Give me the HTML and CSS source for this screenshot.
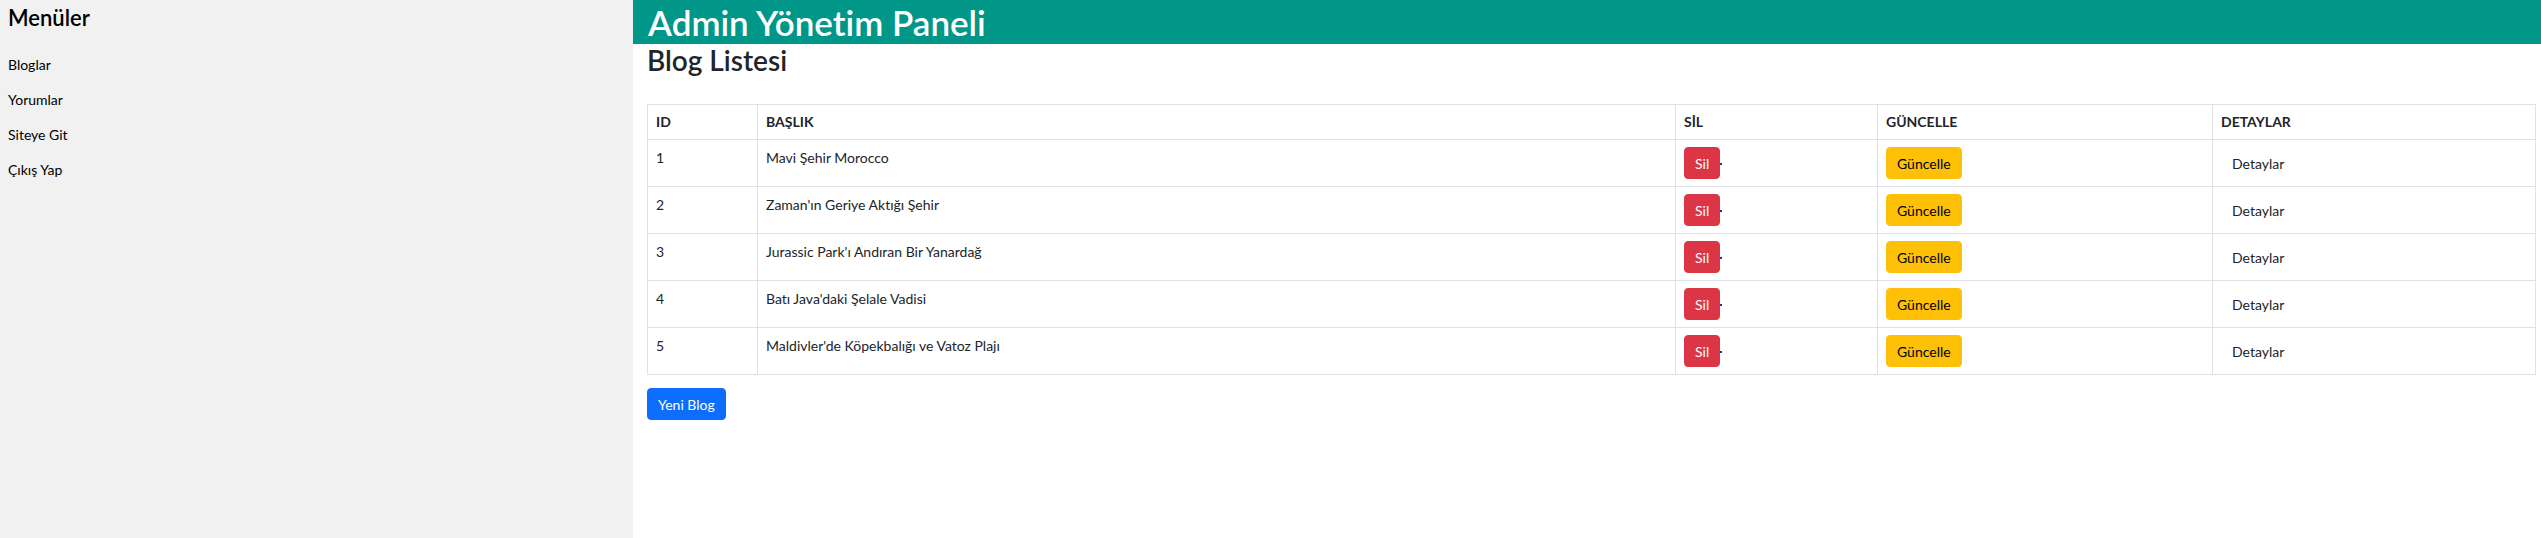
FILE: index.html
```html
<!DOCTYPE html>
<html lang="tr">
<head>
<meta charset="utf-8">
<title>Admin Yönetim Paneli</title>
<link rel="stylesheet" href="styles.css">
</head>
<body>
<div class="layout">
  <aside class="sidebar">
    <h3 class="side-title">Menüler</h3>
    <a class="side-item" href="#">Bloglar</a>
    <a class="side-item" href="#">Yorumlar</a>
    <a class="side-item" href="#">Siteye Git</a>
    <a class="side-item" href="#">Çıkış Yap</a>
  </aside>
  <main class="main">
    <header class="topbar">
      <h1 class="topbar-title">Admin Yönetim Paneli</h1>
    </header>
    <section class="content">
      <h2 class="page-title">Blog Listesi</h2>
      <table class="grid">
        <colgroup>
          <col class="c-id">
          <col class="c-title">
          <col class="c-del">
          <col class="c-upd">
          <col class="c-det">
        </colgroup>
        <thead>
          <tr><th>ID</th><th>BAŞLIK</th><th>SİL</th><th>GÜNCELLE</th><th>DETAYLAR</th></tr>
        </thead>
        <tbody>
          <tr>
            <td>1</td><td>Mavi Şehir Morocco</td>
            <td><a class="btn btn-del" href="#">Sil</a><span class="dot"></span></td>
            <td><a class="btn btn-upd" href="#">Güncelle</a></td>
            <td><a class="btn btn-plain" href="#">Detaylar</a></td>
          </tr>
          <tr>
            <td>2</td><td>Zaman'ın Geriye Aktığı Şehir</td>
            <td><a class="btn btn-del" href="#">Sil</a><span class="dot"></span></td>
            <td><a class="btn btn-upd" href="#">Güncelle</a></td>
            <td><a class="btn btn-plain" href="#">Detaylar</a></td>
          </tr>
          <tr>
            <td>3</td><td>Jurassic Park'ı Andıran Bir Yanardağ</td>
            <td><a class="btn btn-del" href="#">Sil</a><span class="dot"></span></td>
            <td><a class="btn btn-upd" href="#">Güncelle</a></td>
            <td><a class="btn btn-plain" href="#">Detaylar</a></td>
          </tr>
          <tr>
            <td>4</td><td>Batı Java'daki Şelale Vadisi</td>
            <td><a class="btn btn-del" href="#">Sil</a><span class="dot"></span></td>
            <td><a class="btn btn-upd" href="#">Güncelle</a></td>
            <td><a class="btn btn-plain" href="#">Detaylar</a></td>
          </tr>
          <tr>
            <td>5</td><td>Maldivler'de Köpekbalığı ve Vatoz Plajı</td>
            <td><a class="btn btn-del" href="#">Sil</a><span class="dot"></span></td>
            <td><a class="btn btn-upd" href="#">Güncelle</a></td>
            <td><a class="btn btn-plain" href="#">Detaylar</a></td>
          </tr>
        </tbody>
      </table>
      <a class="btn btn-new" href="#">Yeni Blog</a>
    </section>
  </main>
</div>
</body>
</html>
```
FILE: styles.css
```css
* { box-sizing: border-box; }
html, body { margin: 0; padding: 0; }
body {
  font-family: Lato, "Open Sans", sans-serif;
  font-size: 14px;
  line-height: 21px;
  color: #212529;
  background: #fff;
  font-variant-ligatures: none;
}
a { text-decoration: none; }

.layout {
  display: flex;
  min-height: 100vh;
}

.sidebar {
  width: 633px;
  flex: none;
  background: #f1f1f1;
  display: flex;
  flex-direction: column;
}
.side-title {
  margin: 5px 0 16px;
  padding: 0 8px;
  font-size: 22px;
  line-height: 26px;
  font-weight: 600;
  color: #000;
}
.side-item {
  display: block;
  padding: 7px 8px;
  line-height: 21px;
  color: #000;
}

.main {
  flex: 1;
  min-width: 0;
}
.topbar {
  background: #009688;
  height: 44px;
  padding: 4px 15px;
}
.topbar-title {
  margin: 0;
  font-size: 35px;
  line-height: 36px;
  font-weight: 600;
  color: #fff;
}

.content {
  padding: 0 5px 0 14px;
}
.page-title {
  margin: 0 0 27px;
  font-size: 28px;
  line-height: 33px;
  font-weight: 600;
  color: #212529;
}

.grid {
  width: 100%;
  table-layout: fixed;
  border-collapse: separate;
  border-spacing: 0;
  border-top: 1px solid #dee2e6;
  border-left: 1px solid #dee2e6;
}
.c-id { width: 110px; }
.c-title { width: 918px; }
.c-del { width: 202px; }
.c-upd { width: 335px; }
.c-det { width: auto; }

.grid th, .grid td {
  border-right: 1px solid #dee2e6;
  border-bottom: 1px solid #dee2e6;
  text-align: left;
  vertical-align: top;
}
.grid th {
  padding: 8px 8px 8px;
  line-height: 18px;
  font-weight: 700;
  color: #212529;
}
.grid td {
  padding: 7px 8px;
  line-height: 21px;
  height: 47px;
}

.btn {
  display: inline-block;
  vertical-align: top;
  padding: 5px 10px 4px;
  border: 1px solid transparent;
  border-radius: 4px;
  font-size: 14px;
  line-height: 21px;
  color: #212529;
}
.btn-del { background: #dc3545; border-color: #dc3545; color: #fff; }
.btn-upd { background: #ffc107; border-color: #ffc107; color: #000; }
.btn-plain { background: transparent; color: #212529; }
.btn-new {
  margin-top: 13px;
  background: #0d6efd;
  border-color: #0d6efd;
  color: #fff;
}
.dot {
  display: inline-block;
  vertical-align: top;
  width: 2px;
  height: 2px;
  margin-top: 16px;
  background: #0a3d9c;
}
```
